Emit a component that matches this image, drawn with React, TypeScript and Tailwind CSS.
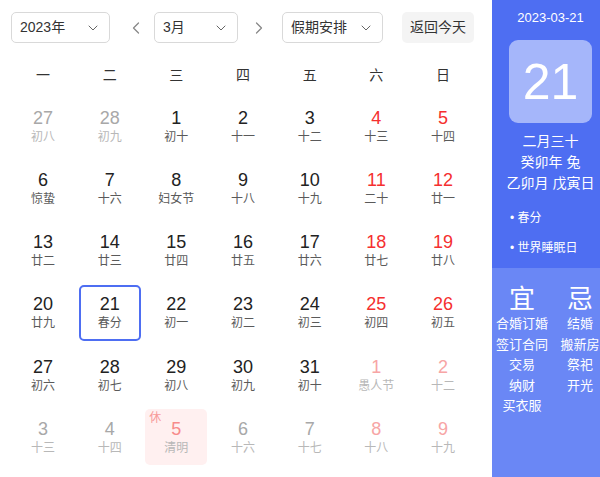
import { ChevronDown, ChevronLeft, ChevronRight } from 'lucide-react';

type Day = {
  n: number;
  lunar: string;
  other?: boolean;
  weekend?: boolean;
  selected?: boolean;
  rest?: boolean;
};

const rows: [number, string][][] = [
  [[27, '初八'], [28, '初九'], [1, '初十'], [2, '十一'], [3, '十二'], [4, '十三'], [5, '十四']],
  [[6, '惊蛰'], [7, '十六'], [8, '妇女节'], [9, '十八'], [10, '十九'], [11, '二十'], [12, '廿一']],
  [[13, '廿二'], [14, '廿三'], [15, '廿四'], [16, '廿五'], [17, '廿六'], [18, '廿七'], [19, '廿八']],
  [[20, '廿九'], [21, '春分'], [22, '初一'], [23, '初二'], [24, '初三'], [25, '初四'], [26, '初五']],
  [[27, '初六'], [28, '初七'], [29, '初八'], [30, '初九'], [31, '初十'], [1, '愚人节'], [2, '十二']],
  [[3, '十三'], [4, '十四'], [5, '清明'], [6, '十六'], [7, '十七'], [8, '十八'], [9, '十九']],
];

const days: Day[] = rows.flatMap((row, r) =>
  row.map(([n, lunar], c) => ({
    n,
    lunar,
    other: (r === 0 && c < 2) || (r === 4 && c > 4) || r === 5,
    weekend: c > 4,
    selected: r === 3 && c === 1,
    rest: r === 5 && c === 2,
  }))
);

const weekdays = ['一', '二', '三', '四', '五', '六', '日'];
const good = ['合婚订婚', '签订合同', '交易', '纳财', '买衣服'];
const bad = ['结婚', '搬新房', '祭祀', '开光'];

function Select({ label, width }: { label: string; width: string }) {
  return (
    <div
      className={`${width} h-[31px] flex items-center justify-between pl-[8px] pr-[8px] border border-[#d9d9d9] rounded-[5px] bg-white text-[14px] text-[#333]`}
    >
      <span>{label}</span>
      <ChevronDown size={16} strokeWidth={1.5} className="text-[#666]" />
    </div>
  );
}

function DayCell({ d }: { d: Day }) {
  let numColor = 'text-[#222]';
  let lunarColor = 'text-[#5a5a5a]';
  if (d.weekend) numColor = 'text-[#f52f2f]';
  if (d.other) {
    numColor = d.weekend ? 'text-[#f7a5a5]' : 'text-[#a8a8a8]';
    lunarColor = 'text-[#b8b8b8]';
  }
  if (d.rest) numColor = 'text-[#f78a8a]';

  return (
    <div
      className={`relative h-[56px] flex flex-col items-center justify-center rounded-[5px] ${
        d.selected ? 'border-2 border-[#4e6ef2]' : ''
      } ${d.rest ? 'bg-[#fff0f0]' : ''}`}
    >
      {d.rest && (
        <span className="absolute left-[4px] top-[1px] text-[12px] leading-[16px] text-[#f79a9a]">休</span>
      )}
      <span className={`text-[18px] leading-[22px] ${numColor}`}>{d.n}</span>
      <span className={`text-[12px] leading-[17px] ${lunarColor}`}>{d.lunar}</span>
    </div>
  );
}

export default function App() {
  return (
    <div
      className="flex w-[600px] h-[477px] bg-white overflow-hidden"
      style={{ fontFamily: '"Liberation Sans", "Noto Sans CJK SC", sans-serif' }}
    >
      {/* calendar */}
      <div className="w-[492px] shrink-0 flex flex-col pt-[12px]">
        <div className="flex items-center h-[31px] pl-[11px]">
          <Select label="2023年" width="w-[99px]" />
          <ChevronLeft size={20} strokeWidth={1.5} className="ml-[16px] text-[#888]" />
          <div className="ml-[8px]">
            <Select label="3月" width="w-[84px]" />
          </div>
          <ChevronRight size={20} strokeWidth={1.5} className="ml-[11px] text-[#888]" />
          <div className="ml-[13px]">
            <Select label="假期安排" width="w-[101px]" />
          </div>
          <div className="ml-[19px] h-[31px] px-[8px] flex items-center rounded-[5px] bg-[#f4f4f4] text-[14px] text-[#333]">
            返回今天
          </div>
        </div>

        <div className="grid grid-cols-7 gap-x-[4.7px] pl-[12px] pr-[18px] mt-[18px] h-[28px] items-center">
          {weekdays.map((w) => (
            <div key={w} className="text-center text-[14px] text-[#333]">
              {w}
            </div>
          ))}
        </div>

        <div className="grid grid-cols-7 gap-x-[4.7px] gap-y-[6.3px] pl-[12px] pr-[18px] mt-[9px]">
          {days.map((d, i) => (
            <DayCell key={i} d={d} />
          ))}
        </div>
      </div>

      {/* side panel */}
      <div className="w-[108px] shrink-0 flex flex-col text-white">
        <div className="h-[268px] bg-[#4e6ef2] flex flex-col items-center pl-[9px]">
          <div className="mt-[9px] text-[13px] leading-[18px]">2023-03-21</div>
          <div className="mt-[13px] w-[83px] h-[83px] rounded-[9px] bg-[#a5b6fa] flex items-center justify-center text-[50px] leading-none">
            21
          </div>
          <div className="mt-[8px] text-[14px] leading-[21px] text-center">
            <div>二月三十</div>
            <div>癸卯年 兔</div>
            <div>乙卯月 戊寅日</div>
          </div>
          <div className="self-start pl-[9px] mt-[16px] text-[12px] leading-[16px]">
            <div>• 春分</div>
            <div className="mt-[14px]">• 世界睡眠日</div>
          </div>
        </div>
        <div className="flex-1 bg-[#6a87f5] flex pt-[16px]">
          <div className="w-[60px] shrink-0 flex flex-col items-center">
            <div className="text-[26px] leading-[30px]">宜</div>
            {good.map((g) => (
              <div key={g} className="text-[13px] leading-[20.5px] whitespace-nowrap">
                {g}
              </div>
            ))}
          </div>
          <div className="flex-1 pl-[8px] flex flex-col items-center">
            <div className="text-[26px] leading-[30px]">忌</div>
            {bad.map((g) => (
              <div key={g} className="text-[13px] leading-[20.5px] whitespace-nowrap">
                {g}
              </div>
            ))}
          </div>
        </div>
      </div>
    </div>
  );
}
